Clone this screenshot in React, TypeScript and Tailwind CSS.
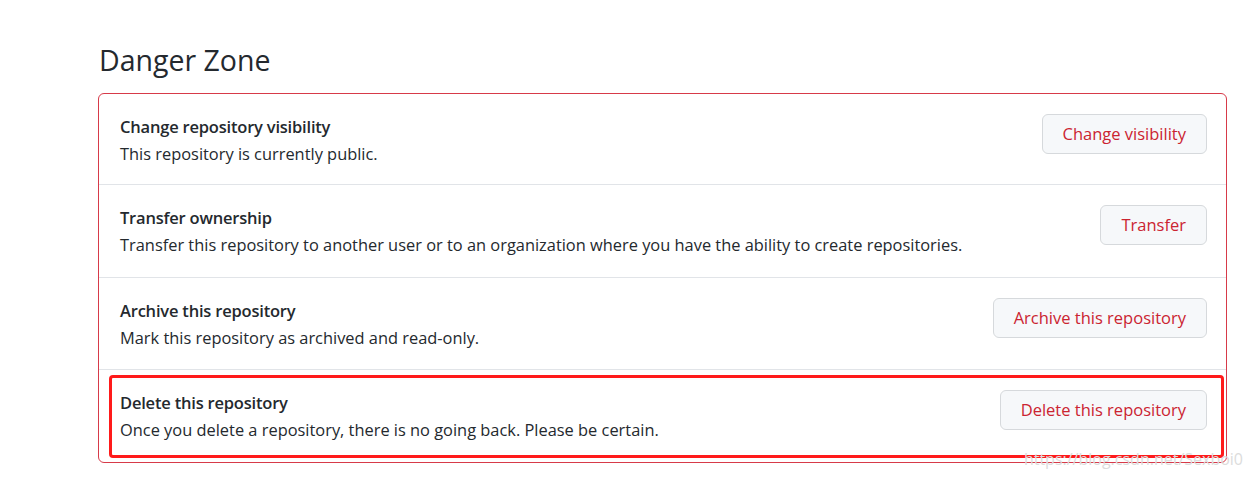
const ROWS = [
  {
    title: 'Change repository visibility',
    desc: 'This repository is currently public.',
    action: 'Change visibility',
    h: 'h-[90px]',
  },
  {
    title: 'Transfer ownership',
    desc: 'Transfer this repository to another user or to an organization where you have the ability to create repositories.',
    action: 'Transfer',
    h: 'h-[93px]',
  },
  {
    title: 'Archive this repository',
    desc: 'Mark this repository as archived and read-only.',
    action: 'Archive this repository',
    h: 'h-[92px]',
  },
  {
    title: 'Delete this repository',
    desc: 'Once you delete a repository, there is no going back. Please be certain.',
    action: 'Delete this repository',
    h: 'h-[93px]',
  },
]

export default function App() {
  return (
    <div
      className="relative h-[478px] w-[1252px] overflow-hidden bg-white pl-[98px] pr-[25px] pt-[42px] text-[#24292e]"
      style={{ fontFamily: '"Open Sans", "Noto Sans", sans-serif' }}
    >
      <h2 className="mb-[15px] pl-px text-[28.5px] leading-[36px] font-normal">Danger Zone</h2>

      <div className="relative rounded-md border border-[#d73a49]">
        {ROWS.map((row, i) => (
          <div
            key={row.title}
            className={`flex ${row.h} items-start justify-between pl-[21px] pr-[19px] pt-[20px] ${
              i > 0 ? 'border-t border-[#e1e4e8]' : ''
            }`}
          >
            <div>
              <div className="text-[16.5px] leading-[26px] font-semibold tracking-[-0.2px]">{row.title}</div>
              <div className="text-[16.4px] leading-[27px]">{row.desc}</div>
            </div>
            <button className="h-[40px] rounded-md border border-[#d6d9dc] bg-[#f6f8fa] px-[20px] text-[16.5px] text-[#cb2431]">
              {row.action}
            </button>
          </div>
        ))}

        {/* annotation box */}
        <div className="absolute bottom-[4px] left-[10px] right-[2px] h-[83px] rounded-[4px] border-[3px] border-[#ff1a1a]" />
      </div>

      <div className="absolute right-[9px] bottom-[9px] text-[16px] leading-[20px] text-[#dcdcdc]">
        https://blog.csdn.net/Sexboi0
      </div>
    </div>
  )
}
